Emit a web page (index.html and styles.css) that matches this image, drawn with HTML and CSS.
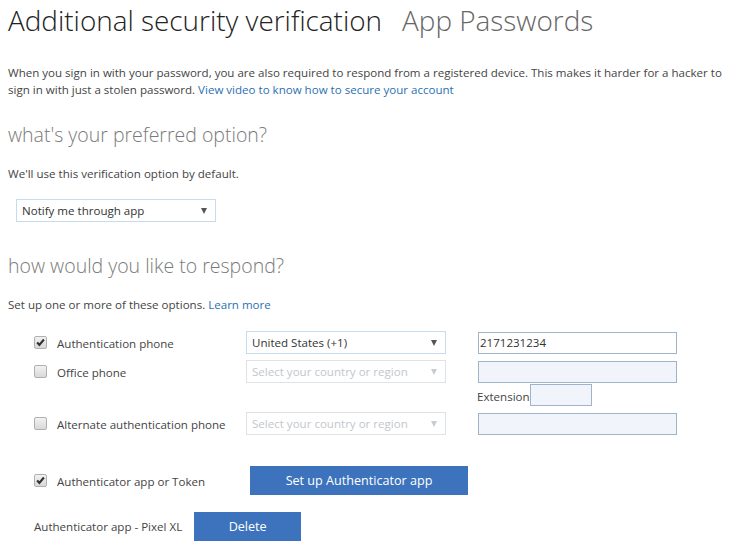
FILE: index.html
```html
<!DOCTYPE html>
<html lang="en">
<head>
  <meta charset="UTF-8" />
  <title>Additional security verification</title>
  <link rel="stylesheet" href="styles.css">
</head>
<body>
  <header class="title-row">
    <h1>Additional security verification</h1>
    <h1 class="tab">App Passwords</h1>
  </header>

  <p class="intro">When you sign in with your password, you are also required to respond from a registered device. This makes it harder for a hacker to sign in with just a stolen password. <a href="#">View video to know how to secure your account</a></p>

  <!-- Preferred option -->
  <h2>what's your preferred option?</h2>
  <p class="note">We'll use this verification option by default.</p>
  <div class="select pref">Notify me through app</div>

  <!-- Respond options -->
  <h2 class="respond">how would you like to respond?</h2>
  <p class="note">Set up one or more of these options. <a href="#">Learn more</a></p>

  <div class="options">
    <div class="opt-row first">
      <span class="check on"><svg viewBox="0 0 13 13"><path d="M2.5 6.5 L5.2 9.3 L10.5 3" /></svg></span>
      <label class="opt-label">Authentication phone</label>
      <div class="select">United States (+1)</div>
      <div class="field">2171231234</div>
    </div>
    <div class="opt-row">
      <span class="check"></span>
      <label class="opt-label">Office phone</label>
      <div class="select off">Select your country or region</div>
      <div class="field off"></div>
    </div>
    <div class="ext-row">
      <span>Extension</span>
      <div class="field off ext"></div>
    </div>
    <div class="opt-row alt">
      <span class="check"></span>
      <label class="opt-label">Alternate authentication phone</label>
      <div class="select off">Select your country or region</div>
      <div class="field off"></div>
    </div>
    <div class="opt-row app">
      <span class="check on"><svg viewBox="0 0 13 13"><path d="M2.5 6.5 L5.2 9.3 L10.5 3" /></svg></span>
      <label class="opt-label">Authenticator app or Token</label>
      <button class="btn setup">Set up Authenticator app</button>
    </div>
    <div class="device-row">
      <span>Authenticator app - Pixel XL</span>
      <button class="btn delete">Delete</button>
    </div>
  </div>
</body>
</html>
```

FILE: styles.css
```css
/* Base */
body {
  font-family: 'Open Sans', 'Noto Sans', sans-serif;
  font-size: 11.55px;
  color: #444;
  margin: 0;
  padding: 0 8px;
  background: #fff;
}

a {
  color: #2a6fb3;
  text-decoration: none;
}

/* Title */
.title-row {
  display: flex;
  gap: 20px;
  padding-top: 2px;
}

h1 {
  margin: 0;
  font-size: 27.9px;
  font-weight: 300;
  line-height: 36px;
  color: #222;
}

h1.tab {
  color: #666;
}

.intro {
  margin: 26px 0 0;
  line-height: 17px;
}

h2 {
  margin: 24px 0 0;
  font-size: 19.5px;
  font-weight: 300;
  line-height: 26px;
  color: #7a7a7a;
}

.note {
  margin: 18px 0 0;
  line-height: 16px;
}

/* Select boxes */
.select {
  position: relative;
  box-sizing: border-box;
  width: 200px;
  height: 23px;
  padding: 2px 20px 0 5px;
  border: 1px solid #c5dcee;
  color: #333;
  line-height: 18px;
  white-space: nowrap;
  overflow: hidden;
}

.select::after {
  content: "";
  position: absolute;
  right: 8px;
  top: 8px;
  border-left: 3.5px solid transparent;
  border-right: 3.5px solid transparent;
  border-top: 6px solid #555;
}

.select.off {
  border-color: #dde3e8;
  color: #c2c7cc;
}

.select.off::after {
  border-top-color: #c8cccf;
}

.select.pref {
  margin: 17px 0 0 8px;
}

h2.respond {
  margin-top: 31px;
}

/* Option rows */
.options {
  padding-left: 26px;
  margin-top: 18px;
}

.opt-row {
  display: flex;
  align-items: center;
  height: 23px;
}

.opt-row + .opt-row,
.opt-row.first + .opt-row {
  margin-top: 6px;
}

.check {
  box-sizing: border-box;
  width: 13px;
  height: 13px;
  border: 1px solid #b0b0b0;
  border-radius: 2px;
  background: linear-gradient(#f2f2f2, #d8d8d8);
  margin-right: 10px;
  flex: none;
}

.check svg {
  display: block;
  width: 11px;
  height: 11px;
}

.check path {
  fill: none;
  stroke: #333;
  stroke-width: 2.6;
}

.opt-label {
  width: 189px;
  flex: none;
  padding-top: 2px;
}

.field {
  box-sizing: border-box;
  width: 199px;
  height: 22px;
  margin-left: 32px;
  border: 1px solid #9fb4c6;
  line-height: 20px;
  padding-left: 1px;
  color: #333;
}

.field.off {
  background: #f1f5fb;
}

.ext-row {
  display: flex;
  align-items: center;
  height: 22px;
  margin: 1px 0 0 443px;
}

.ext-row span {
  padding-top: 2px;
}

.field.ext {
  width: 62px;
  margin-left: 0;
}

.opt-row.alt {
  margin-top: 6px;
}

.opt-row.app {
  height: 29px;
  margin-top: 31px;
}

/* Buttons */
.btn {
  font-family: inherit;
  font-size: 12.6px;
  color: #fff;
  background: #3c73bc;
  border: none;
  height: 29px;
  cursor: pointer;
}

.btn.setup {
  width: 218px;
  margin-left: 4px;
}

.device-row {
  display: flex;
  align-items: center;
  margin: 17px 0 0 0;
}

.btn.delete {
  width: 107px;
  margin-left: 12px;
}
```
